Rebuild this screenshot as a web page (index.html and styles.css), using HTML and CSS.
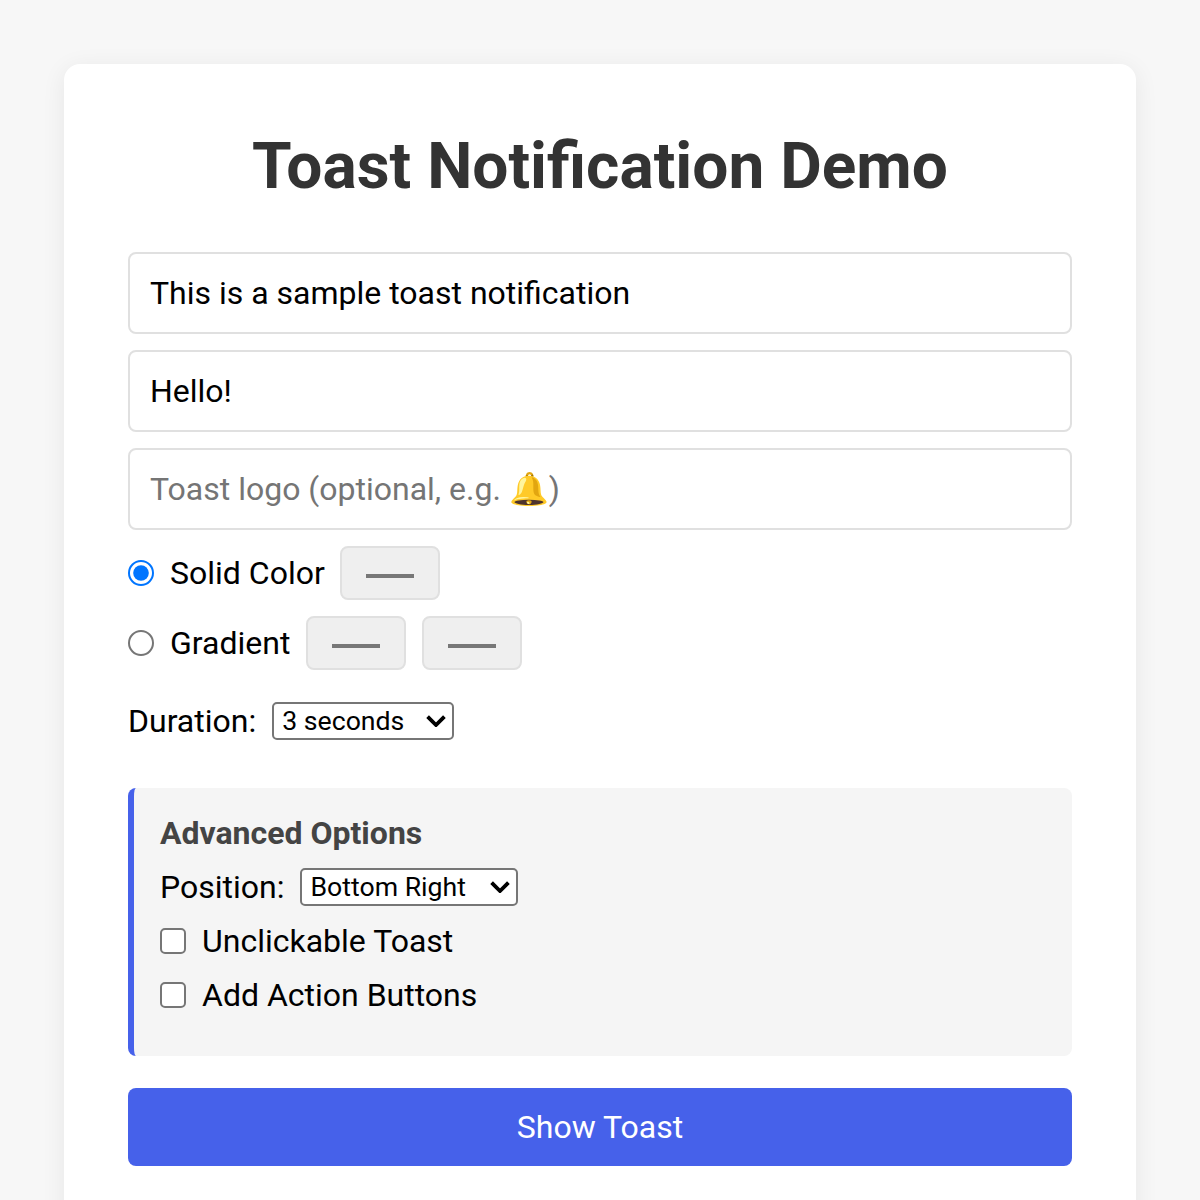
FILE: index.html
```
<!DOCTYPE html>
<html lang="en">
<head>
<meta charset="utf-8">
<title>Toast Notification Demo</title>
<link rel="stylesheet" href="styles.css">
</head>
<body>
<main class="card">
  <h1>Toast Notification Demo</h1>
  <input class="text" type="text" value="This is a sample toast notification">
  <input class="text" type="text" value="Hello!">
  <input class="text" type="text" placeholder="Toast logo (optional, e.g. 🔔)">
  <div class="row">
    <label class="opt"><input type="radio" name="bg" checked> Solid Color</label>
    <input class="swatch" type="color" value="#000000">
  </div>
  <div class="row">
    <label class="opt"><input type="radio" name="bg"> Gradient</label>
    <input class="swatch" type="color" value="#000000">
    <input class="swatch" type="color" value="#000000">
  </div>
  <div class="field duration">
    <label>Duration:</label>
    <select class="sel-duration"><option>3 seconds</option></select>
  </div>
  <section class="advanced">
    <h3>Advanced Options</h3>
    <div class="field"><label>Position:</label> <select class="sel-position"><option>Bottom Right</option></select></div>
    <label class="check"><input type="checkbox"> Unclickable Toast</label>
    <label class="check"><input type="checkbox"> Add Action Buttons</label>
  </section>
  <button class="show">Show Toast</button>
</main>
</body>
</html>
```
FILE: styles.css
```
* { box-sizing: border-box; }
html { zoom: 2; }
html, body { margin: 0; }
body {
  background: #f7f7f7;
  font-family: Roboto, sans-serif;
  padding: 32px;
}
.card {
  background: #fff;
  border-radius: 8px;
  box-shadow: 0 2px 12px rgba(0, 0, 0, 0.07);
  padding: 32px;
}
h1 {
  margin: 0 0 23.5px;
  text-align: center;
  font-size: 32px;
  line-height: 38.5px;
  font-weight: 700;
  color: #333;
}
.text {
  display: block;
  width: 100%;
  margin-bottom: 8px;
  padding: 10px;
  border: 1px solid #e0e0e0;
  border-radius: 4px;
  font: 16px Roboto, sans-serif;
  color: #000;
}
.row {
  display: flex;
  align-items: center;
  gap: 8px;
  margin-bottom: 8px;
}
.opt, .check {
  display: flex;
  align-items: center;
  font-size: 16px;
  color: #000;
}
.opt { margin-right: -0.25px; }
.opt input, .check input { margin: 0 8px 0 0; }
.swatch {
  width: 50px;
  height: 27px;
  margin: 0;
  padding: 10.5px 10px 9.5px;
  border: 1px solid #e0e0e0;
  border-radius: 4px;
}
.field {
  display: flex;
  align-items: center;
  gap: 8px;
  height: 19px;
  font-size: 16px;
  color: #000;
}
.duration { margin-top: 16px; }
select {
  appearance: none;
  height: 19px;
  padding: 0 0 0 4px;
  border: 1px solid #767676;
  border-radius: 2.5px;
  background: #fff url("data:image/svg+xml,%3Csvg xmlns='http://www.w3.org/2000/svg' width='10' height='6' viewBox='0 0 10 6'%3E%3Cpath d='M.8.8 5 5 9.2.8' fill='none' stroke='%23000' stroke-width='1.9'/%3E%3C/svg%3E") no-repeat right 3px center;
  font-family: Roboto, sans-serif;
  font-size: 13.333px;
  color: #000;
}
.sel-duration { width: 91px; }
.sel-position { width: 109px; }
.advanced {
  margin-top: 24px;
  height: 134px;
  padding: 13px 13px 0;
  background: #f5f5f5;
  border-left: 3px solid #4661ea;
  border-radius: 4px;
}
.advanced h3 { margin: 0 0 8px; font-size: 16px; line-height: 19px; color: #444; }
.check { height: 27px; }
.advanced .field { margin-bottom: 4px; }
.show {
  display: block;
  width: 100%;
  height: 39px;
  margin-top: 16px;
  border: 0;
  border-radius: 4px;
  background: #4661ea;
  color: #fff;
  font: 16px Roboto, sans-serif;
}
```
